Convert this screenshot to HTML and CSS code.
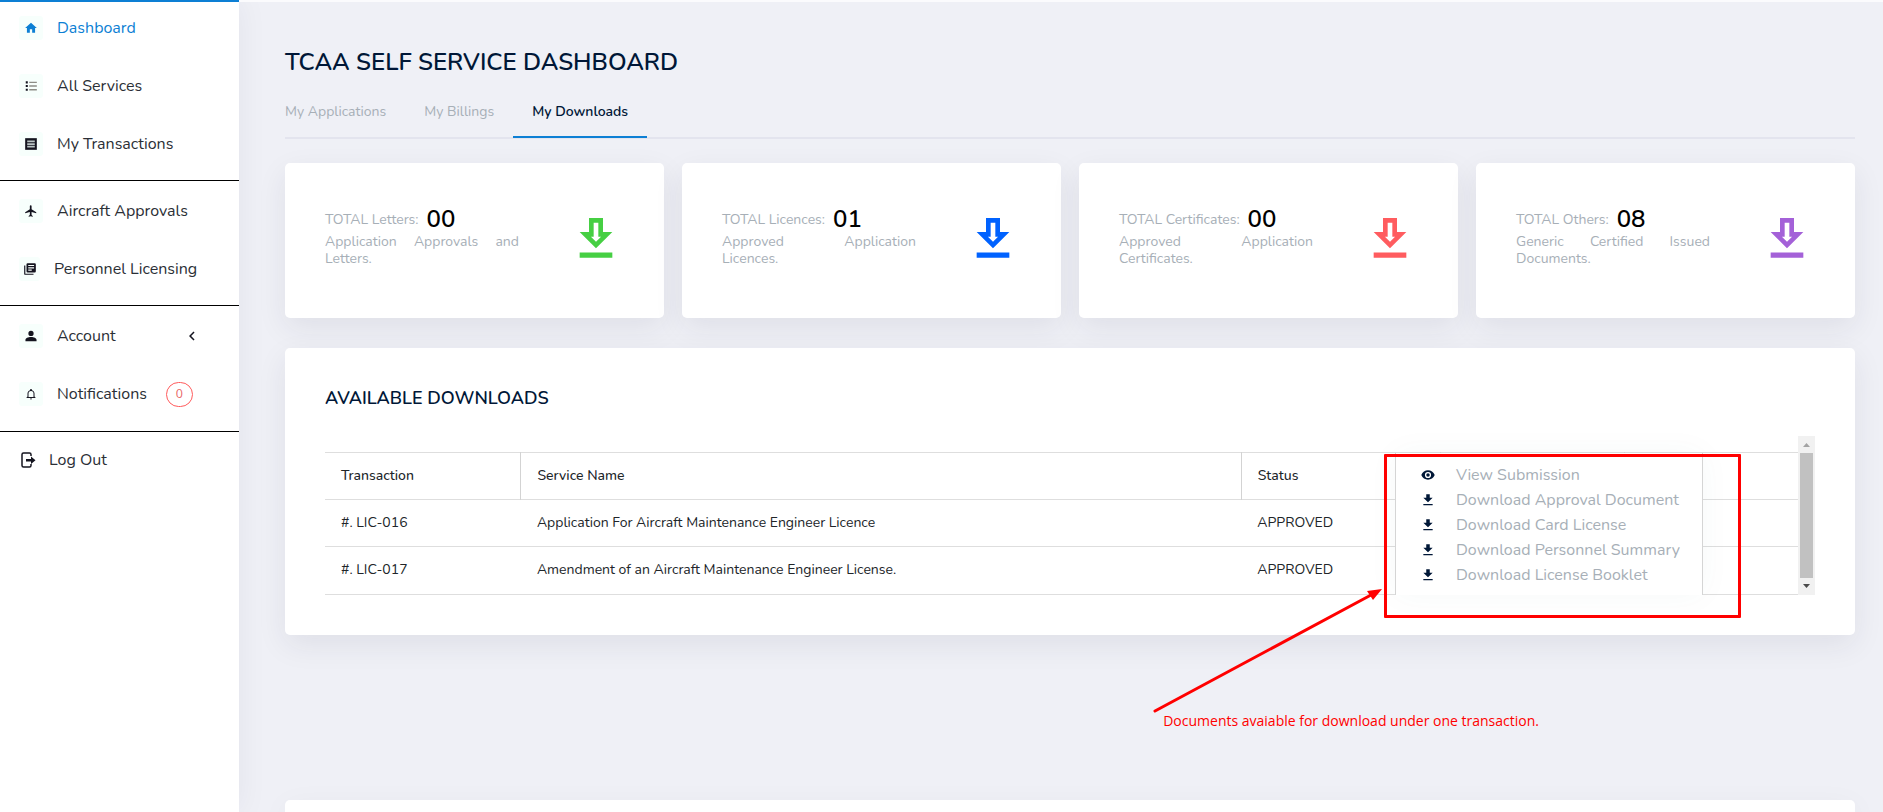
FILE: index.html
```html
<!DOCTYPE html>
<html lang="en">
<head>
<meta charset="utf-8">
<title>TCAA Self Service Dashboard</title>
<link rel="stylesheet" href="styles.css">
</head>
<body>
<svg class="sprite" aria-hidden="true">
  <symbol id="i-download" viewBox="0 0 24 24"><path d="M4,21H20V19H4M20,8H15V2H9V8H4L12,16Z"/></symbol>
  <symbol id="i-download-outline" viewBox="0 0 24 24"><path d="M13,5V11H14.17L12,13.17L9.83,11H11V5H13M15,3H9V9H5L12,16L19,9H15V3M19,17.8H5V20H19V17.8Z"/></symbol>
</svg>
<div class="layout">
  <aside class="sidebar">
    <nav aria-label="Main">
      <ul class="group">
        <li><a class="item active" href="#"><span class="tile"><svg class="icon" viewBox="0 0 24 24"><path d="M10,20V14H14V20H19V12H22L12,3L2,12H5V20H10Z"/></svg></span>Dashboard</a></li>
        <li><a class="item" href="#"><span class="tile"><svg class="icon" viewBox="0 0 24 24"><path d="M3,4H6.500V7.500H3zM3,10.200H6.500V13.700H3zM3,16.500H6.500V20H3z"/><path class="soft" d="M9,4.500H22V7H9zM9,10.800H22V13.300H9zM9,17H22V19.500H9z"/></svg></span>All Services</a></li>
        <li><a class="item" href="#"><span class="tile"><svg class="icon" viewBox="0 0 24 24"><path d="M2,2H22V22H2Z"/><path class="lines" d="M5.500,6H18.500V9H5.500zM5.500,10.500H18.500V13.500H5.500zM5.500,15H18.500V18H5.500z"/></svg></span>My Transactions</a></li>
      </ul>
      <ul class="group">
        <li><a class="item" href="#"><span class="tile"><svg class="icon" viewBox="0 0 24 24"><path d="M21,16V14L13,9V3.500A1.500,1.500 0 0,0 11.500,2A1.500,1.500 0 0,0 10,3.500V9L2,14V16L10,13.500V19L8,20.500V22L11.500,21L15,22V20.500L13,19V13.500L21,16Z"/></svg></span>Aircraft Approvals</a></li>
        <li><a class="item tight" href="#"><span class="tile"><svg class="icon" viewBox="0 0 24 24"><path d="M19,7H9V5H19M15,15H9V13H15M19,11H9V9H19M20,2H8A2,2 0 0,0 6,4V16A2,2 0 0,0 8,18H20A2,2 0 0,0 22,16V4A2,2 0 0,0 20,2M4,6H2V20A2,2 0 0,0 4,22H18V20H4V6Z"/></svg></span>Personnel Licensing</a></li>
      </ul>
      <ul class="group">
        <li><a class="item" href="#"><span class="tile"><svg class="icon" viewBox="0 0 24 24"><path d="M12,3A4.500,4.500 0 0,1 16.500,7.500A4.500,4.500 0 0,1 12,12A4.500,4.500 0 0,1 7.500,7.500A4.500,4.500 0 0,1 12,3M12,13.500C17,13.500 21.500,15.500 21.500,18.500V21H2.500V18.500C2.500,15.500 7,13.500 12,13.500Z"/></svg></span>Account<svg class="chevron" viewBox="0 0 24 24"><path d="M15.410,16.580L10.830,12L15.410,7.410L14,6L8,12L14,18L15.410,16.580Z"/></svg></a></li>
        <li><a class="item" href="#"><span class="tile"><svg class="icon bell" viewBox="0 0 24 24"><path d="M10,21H14A2,2 0 0,1 12,23A2,2 0 0,1 10,21M21,19V20H3V19L5,17V11C5,7.900 7.030,5.170 10,4.290V4A2,2 0 0,1 12,2A2,2 0 0,1 14,4V4.290C16.970,5.170 19,7.900 19,11V17L21,19M17,11A5,5 0 0,0 12,6A5,5 0 0,0 7,11V18H17V11Z"/></svg></span>Notifications<span class="badge">0</span></a></li>
      </ul>
      <ul class="group">
        <li><a class="item logout" href="#"><svg class="icon" viewBox="0 0 18 18"><path class="frame" d="M12,5V3.500Q12,2 10.500,2H4.500Q3,2 3,3.500V14.500Q3,16 4.500,16H10.500Q12,16 12,14.500V13"/><path d="M7,8V10.500H12V13L16.500,9.200L12,5.500V8Z"/></svg>Log Out</a></li>
      </ul>
    </nav>
  </aside>

  <main class="main">
    <h1 class="page-title">TCAA SELF SERVICE DASHBOARD</h1>
    <nav class="tabs" aria-label="Sections">
      <a class="tab" href="#">My Applications</a>
      <a class="tab" href="#">My Billings</a>
      <a class="tab current" href="#">My Downloads</a>
    </nav>

    <section class="cards">
      <article class="card stat">
        <div class="stat-text"><div class="stat-head">TOTAL Letters: <strong>00</strong></div><p>Application Approvals and Letters.</p></div>
        <svg class="stat-icon green"><use href="#i-download-outline"/></svg>
      </article>
      <article class="card stat">
        <div class="stat-text"><div class="stat-head">TOTAL Licences: <strong>01</strong></div><p>Approved Application Licences.</p></div>
        <svg class="stat-icon blue"><use href="#i-download-outline"/></svg>
      </article>
      <article class="card stat">
        <div class="stat-text"><div class="stat-head">TOTAL Certificates: <strong>00</strong></div><p>Approved Application Certificates.</p></div>
        <svg class="stat-icon red"><use href="#i-download-outline"/></svg>
      </article>
      <article class="card stat">
        <div class="stat-text"><div class="stat-head">TOTAL Others: <strong>08</strong></div><p>Generic Certified Issued Documents.</p></div>
        <svg class="stat-icon purple"><use href="#i-download-outline"/></svg>
      </article>
    </section>

    <section class="card panel">
      <h2 class="panel-title">AVAILABLE DOWNLOADS</h2>
      <div class="table-area">
        <table class="table">
          <colgroup><col class="c-id"><col class="c-name"><col class="c-status"><col class="c-action"><col></colgroup>
          <thead><tr><th>Transaction</th><th>Service Name</th><th>Status</th><th></th><th></th></tr></thead>
          <tbody>
            <tr><td>#. LIC-016</td><td>Application For Aircraft Maintenance Engineer Licence</td><td>APPROVED</td><td></td><td></td></tr>
            <tr><td>#. LIC-017</td><td>Amendment of an Aircraft Maintenance Engineer License.</td><td>APPROVED</td><td></td><td></td></tr>
          </tbody>
        </table>
        <div class="scrollbar" aria-hidden="true">
          <svg class="arrow up" viewBox="0 0 17 17"><path d="M5,11H12L8.500,7Z"/></svg>
          <span class="thumb"></span>
          <svg class="arrow" viewBox="0 0 17 17"><path d="M5,6H12L8.500,10Z"/></svg>
        </div>
        <ul class="menu">
          <li><a href="#"><svg class="menu-icon" viewBox="0 0 24 24"><path d="M12,9A3,3 0 0,1 15,12A3,3 0 0,1 12,15A3,3 0 0,1 9,12A3,3 0 0,1 12,9M12,4C17,4 21.500,7 23.500,12C21.500,17 17,20 12,20C7,20 2.500,17 0.500,12C2.500,7 7,4 12,4M12,6.700A5.300,5.300 0 0,0 6.700,12A5.300,5.300 0 0,0 12,17.300A5.300,5.300 0 0,0 17.300,12A5.300,5.300 0 0,0 12,6.700Z"/></svg>View Submission</a></li>
          <li><a href="#"><svg class="menu-icon"><use href="#i-download"/></svg>Download Approval Document</a></li>
          <li><a href="#"><svg class="menu-icon"><use href="#i-download"/></svg>Download Card License</a></li>
          <li><a href="#"><svg class="menu-icon"><use href="#i-download"/></svg>Download Personnel Summary</a></li>
          <li><a href="#"><svg class="menu-icon"><use href="#i-download"/></svg>Download License Booklet</a></li>
        </ul>
      </div>
      <div class="highlight"></div>
      <svg class="pointer" viewBox="0 0 230 126"><path class="shaft" d="M2,124L218,8"/><path d="M229,2L214,4L220,13Z"/></svg>
      <p class="note">Documents avaiable for download under one transaction.</p>
    </section>

    <section class="card next-panel"></section>
  </main>
</div>
</body>
</html>
```
FILE: styles.css
```css
* { box-sizing: border-box; }
body {
  margin: 0;
  background: #eff0f6;
  color: #212529;
  font: 14px/20px Nunito, Lato, sans-serif;
}
h1, h2, p, ul { margin: 0; padding: 0; }
ul { list-style: none; }
a { color: inherit; text-decoration: none; }
svg { fill: currentColor; flex: none; }
.sprite { display: none; }

.layout { display: flex; min-height: 100vh; }

/* Sidebar */
.sidebar {
  flex: 0 0 239px;
  background: #fff;
  border-top: 2px solid #0d7fd4;
  box-shadow: 0 0 30px rgba(40, 40, 70, .06);
}
.group {
  display: grid;
  gap: 10px;
  padding: 6px 0 12px;
  border-bottom: 1px solid #000;
}
.group:first-child { padding-top: 2px; }
.group:nth-child(3) { padding-bottom: 13px; }
.group:last-child { padding-top: 4px; border-bottom: 0; }
.item {
  display: flex;
  align-items: center;
  height: 48px;
  padding-left: 19px;
  font-size: 16px;
  color: #2b2f36;
}
.item.active { color: #0d7fd4; }
.tile {
  display: grid;
  place-items: center;
  width: 24px;
  height: 24px;
  margin-right: 14px;
  border-radius: 3px;
  background: #f7fffc;
  color: #14141f;
}
.active .tile { color: #0d7fd4; }
.tight .tile { width: 21px; }
.icon { width: 14px; height: 14px; }
.bell { width: 12px; height: 12px; }
.soft { fill: #8d8d86; }
.lines { fill: #b9c4c4; }
.chevron { width: 18px; height: 18px; margin: 0 38px 0 auto; color: #14141f; }
.badge {
  width: 27px;
  height: 25px;
  margin-left: 19px;
  border: 1px solid #ff5b5c;
  border-radius: 13px;
  color: #e8605f;
  font-size: 12px;
  line-height: 23px;
  text-align: center;
}
.logout .icon { width: 18px; height: 18px; margin-right: 12px; color: #14141f; }
.frame { fill: none; stroke: currentColor; stroke-width: 1.5; }

/* Main column */
.main {
  display: flex;
  flex-direction: column;
  flex: 1;
  min-width: 0;
  padding: 44px 28px 0 46px;
  border-top: 2px solid #fbfbfd;
}
.page-title {
  color: #001737;
  font-size: 24px;
  font-weight: 600;
  line-height: 32px;
}
.tabs {
  display: flex;
  margin-top: 16px;
  border-bottom: 2px solid #e3e4ee;
}
.tab {
  height: 44px;
  margin-bottom: -1px;
  padding: 8px 19px 0;
  border-bottom: 2px solid transparent;
  color: #a7afb7;
}
.tab:first-child { padding-left: 0; }
.tab.current { border-color: #0d7fd4; color: #001737; font-weight: 600; }

.card {
  border-radius: 5px;
  background: #fff;
  box-shadow: 0 10px 30px rgba(40, 40, 60, .08);
}
.cards {
  display: grid;
  grid-template-columns: repeat(4, 1fr);
  gap: 18px;
  margin-top: 24px;
}
.stat {
  display: flex;
  justify-content: space-between;
  height: 155px;
  padding: 43px 40px 0;
}
.stat-text { width: 194px; color: #a7afb7; line-height: 17px; }
.stat-head { display: flex; align-items: center; gap: 8px; height: 27px; white-space: nowrap; }
.stat-head strong { color: #000; font-size: 24px; font-weight: 600; }
.stat-text p { text-align: justify; }
.stat-icon { width: 56px; height: 56px; margin-top: 5px; }
.green { color: #46cf43; }
.blue { color: #0062ff; }
.red { color: #ff5c5f; }
.purple { color: #a461d8; }

.panel { position: relative; margin-top: 30px; padding: 37px 40px 40px; }
.panel-title { color: #001737; font-size: 18px; font-weight: 600; line-height: 26px; }
.table-area { position: relative; display: flex; margin-top: 25px; }
.table {
  flex: 1;
  margin-top: 16px;
  border-collapse: collapse;
  table-layout: fixed;
  border-bottom: 1px solid #dedede;
}
.c-id { width: 13.3%; }
.c-name { width: 48.9%; }
.c-status { width: 13.5%; }
.c-action { width: 12.5%; }
.table th, .table td {
  height: 47px;
  padding: 0 16px 1px;
  border-top: 1px solid #dedede;
  text-align: left;
  font-weight: 400;
}
.table tr:last-child td { height: 48px; }
.table th { font-weight: 500; border-right: 1px solid #d3d3d3; }
.table th:last-child { border-right: 0; }

.scrollbar {
  display: flex;
  flex-direction: column;
  align-items: center;
  width: 17px;
  background: #f1f1f1;
  color: #4b4b4b;
}
.arrow { width: 17px; height: 17px; }
.arrow.up { color: #a3a3a3; }
.thumb { flex: 1; width: 13px; background: #c1c1c1; }

.menu {
  position: absolute;
  top: 17px;
  right: 112px;
  bottom: 0;
  width: 308px;
  padding: 10px 0 0 25px;
  border: solid #d5d5d5;
  border-width: 0 1px;
  background: #fff;
  color: #a7afb7;
  font-size: 16px;
  line-height: 25px;
  white-space: nowrap;
  box-shadow: 0 0 30px rgba(60, 100, 100, .04);
}
.menu a { display: flex; align-items: center; }
.menu-icon { width: 14px; height: 14px; margin: 0 21px 2px 0; color: #001737; }

/* Annotation over the panel */
.highlight {
  position: absolute;
  top: 106px;
  right: 114px;
  width: 357px;
  height: 164px;
  border: 3px solid #f00;
  border-radius: 1px;
}
.pointer { position: absolute; top: 239px; right: 472px; width: 230px; height: 126px; color: #f00; }
.shaft { stroke: #f00; stroke-width: 3; stroke-linecap: round; }
.note {
  position: absolute;
  top: 363px;
  right: 316px;
  color: #f00;
  font: 14px/20px "Open Sans", sans-serif;
  white-space: nowrap;
}
.next-panel { flex: 1; margin-top: 165px; border-radius: 5px 5px 0 0; }
```
